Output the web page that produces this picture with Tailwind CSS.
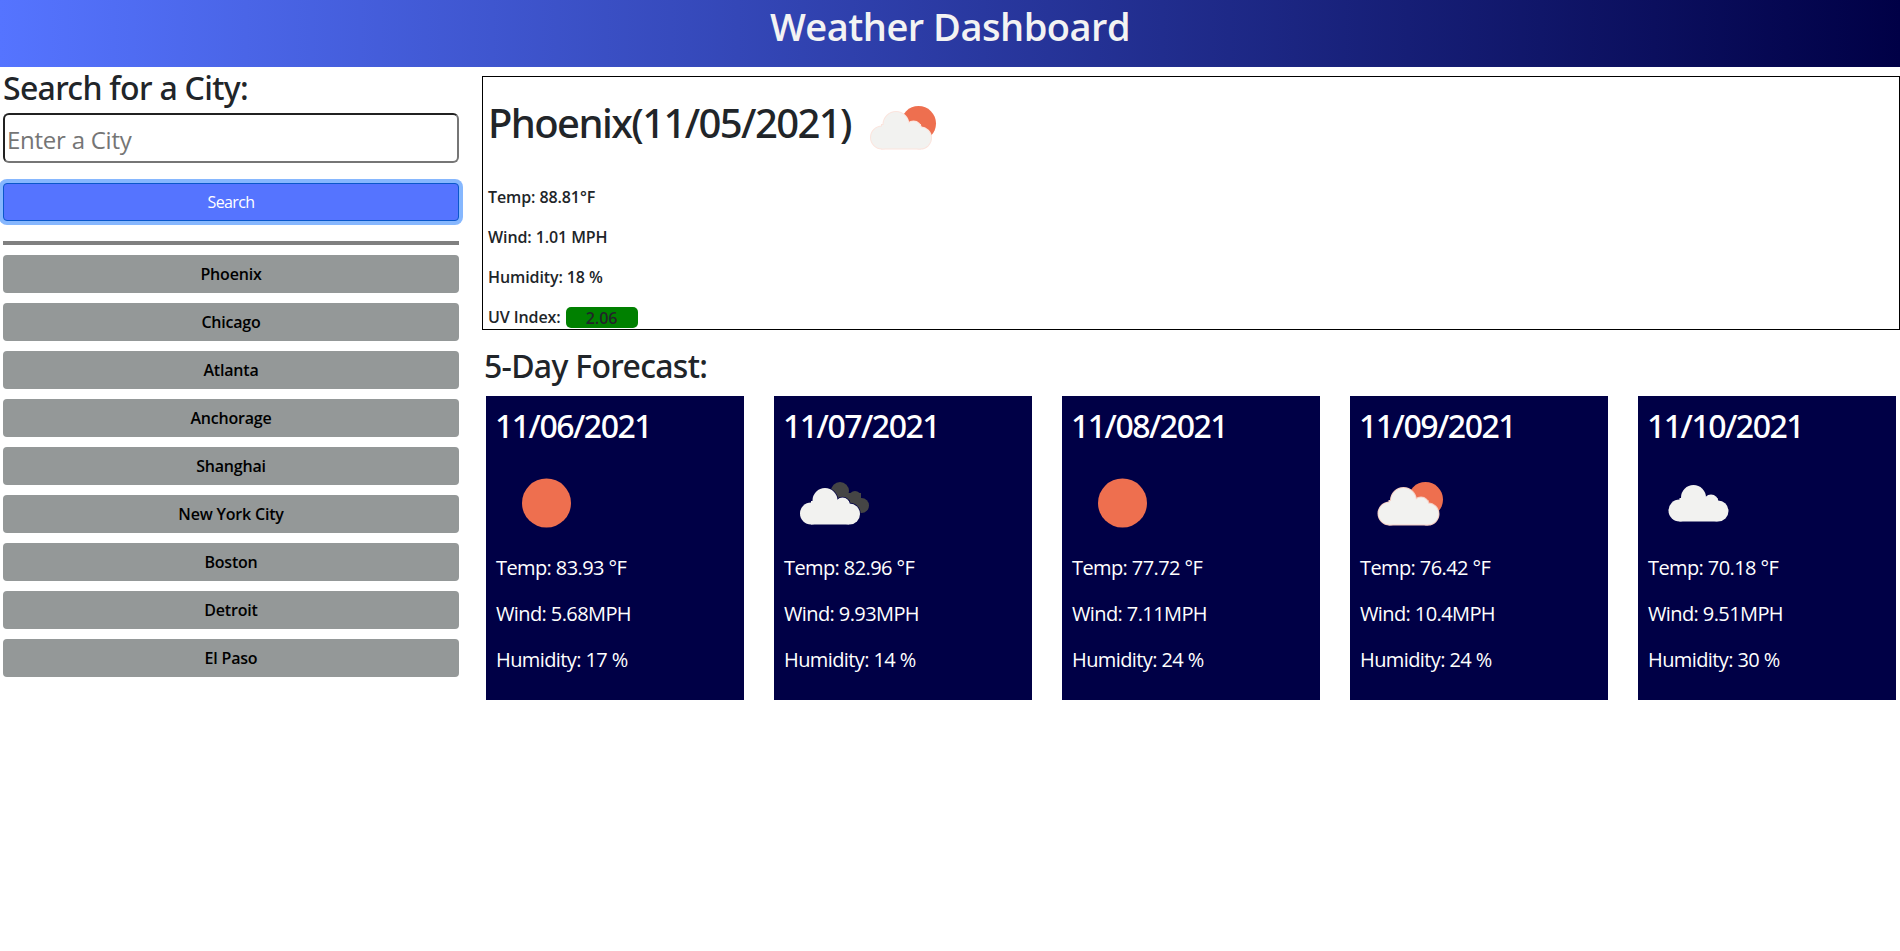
<!DOCTYPE html>
<html lang="en">
<head>
<meta charset="utf-8">
<title>Weather Dashboard</title>
<script src="https://cdn.jsdelivr.net/npm/@tailwindcss/browser@4"></script>
</head>
<body class="bg-white text-[#212529] font-['Open_Sans','Noto_Sans',sans-serif]">
<svg width="0" height="0" class="absolute">
  <defs>
    <g id="cloud">
      <circle cx="29" cy="60.5" r="11"/>
      <circle cx="43" cy="47.5" r="12.5"/>
      <circle cx="60.5" cy="52" r="7.5"/>
      <circle cx="67.5" cy="61" r="10.5"/>
      <rect x="29" y="48" width="38" height="23.5"/>
    </g>
    <g id="cloud-small">
      <circle cx="56" cy="38" r="9"/>
      <circle cx="71" cy="44" r="6"/>
      <circle cx="77.5" cy="52.5" r="7.5"/>
      <rect x="55" y="40" width="22" height="20"/>
    </g>
  </defs>
</svg>
<header class="h-[67px] bg-[linear-gradient(to_right,#5574ff,#000046)] flex justify-center">
  <h1 class="text-[38px] leading-[52px] font-semibold text-[#f3f3f3] tracking-[-0.5px]">Weather Dashboard</h1>
</header>
<div class="flex">
  <aside class="w-[482px] shrink-0 pl-[3px] pr-[23px]">
    <h2 class="text-[32px] leading-[44px] font-['Noto_Sans',sans-serif] font-medium tracking-[-0.7px] mt-[-1px]">Search for a City:</h2>
    <input class="block w-full h-[50px] mt-[3px] border-2 border-t-[#212121] border-l-[#212121] border-r-[#767676] border-b-[#767676] rounded-md px-[2px] pt-[2px] text-[24px] tracking-[-0.25px] placeholder:text-[#757575] outline-none" placeholder="Enter a City">
    <button class="block w-full h-[38px] mt-[20px] rounded-[4px] bg-[#5574ff] border border-[#0a58ca] ring-4 ring-[#86b7fe] text-white text-[16px] tracking-[-0.6px]">Search</button>
    <div class="h-1 mt-[20px] bg-[#808080]"></div>
    <div class="mt-[10px] flex flex-col gap-[10px]">
      <button class="h-[38px] rounded-[4px] bg-[#949898] text-black text-[16px] font-semibold tracking-[-0.2px]">Phoenix</button>
      <button class="h-[38px] rounded-[4px] bg-[#949898] text-black text-[16px] font-semibold tracking-[-0.2px]">Chicago</button>
      <button class="h-[38px] rounded-[4px] bg-[#949898] text-black text-[16px] font-semibold tracking-[-0.2px]">Atlanta</button>
      <button class="h-[38px] rounded-[4px] bg-[#949898] text-black text-[16px] font-semibold tracking-[-0.2px]">Anchorage</button>
      <button class="h-[38px] rounded-[4px] bg-[#949898] text-black text-[16px] font-semibold tracking-[-0.2px]">Shanghai</button>
      <button class="h-[38px] rounded-[4px] bg-[#949898] text-black text-[16px] font-semibold tracking-[-0.2px]">New York City</button>
      <button class="h-[38px] rounded-[4px] bg-[#949898] text-black text-[16px] font-semibold tracking-[-0.2px]">Boston</button>
      <button class="h-[38px] rounded-[4px] bg-[#949898] text-black text-[16px] font-semibold tracking-[-0.2px]">Detroit</button>
      <button class="h-[38px] rounded-[4px] bg-[#949898] text-black text-[16px] font-semibold tracking-[-0.2px]">El Paso</button>
    </div>
  </aside>
  <main class="flex-1 min-w-0 pt-[9px]">
    <section class="h-[254px] border border-black pl-[5px] overflow-hidden">
      <div class="flex h-[100px]">
        <h2 class="text-[40px] leading-[100px] font-['Noto_Sans',sans-serif] font-medium tracking-[-1.6px] mt-[-4px] w-[365px]">Phoenix(11/05/2021)</h2>
        <svg class="w-[100px] h-[100px]" viewBox="0 0 100 100">
          <circle cx="65.5" cy="46.5" r="17.5" fill="#ee6f4f"/>
          <use href="#cloud" fill="#fbe4dd" stroke="#fbe4dd" stroke-width="2"/>
          <use href="#cloud" fill="#f2f2f0"/>
        </svg>
      </div>
      <div class="mt-[8px] flex flex-col gap-[16px] text-[16px] leading-[24px] font-semibold tracking-[-0.1px]">
        <p>Temp: 88.81°F</p>
        <p>Wind: 1.01 MPH</p>
        <p>Humidity: 18 %</p>
        <p class="flex items-center">UV Index:<span class="ml-[5px] h-[21px] w-[72px] rounded-[5px] bg-[#008000] text-center leading-[22px]">2.06</span></p>
      </div>
    </section>
    <h3 class="text-[32px] leading-[40px] font-['Noto_Sans',sans-serif] font-medium tracking-[-0.7px] ml-[2px] mt-[16px]">5-Day Forecast:</h3>
    <div class="grid grid-cols-5 gap-[30px] mx-[4px] mt-[10px]">
      <article class="h-[304px] bg-[#000046] text-white p-[10px] pt-[11px]">
        <h4 class="text-[32px] leading-[38px] mb-[8px] ml-[-1px] font-['Noto_Sans',sans-serif] font-medium tracking-[-1.5px]">11/06/2021</h4>
        <svg class="w-[100px] h-[100px]" viewBox="0 0 100 100"><circle cx="50.5" cy="50" r="24.5" fill="#ee6f4f"/></svg>
        <div class="flex flex-col gap-[16px] text-[20px] leading-[30px] tracking-[-0.6px]">
          <p>Temp: 83.93 °F</p><p>Wind: 5.68MPH</p><p>Humidity: 17 %</p>
        </div>
      </article>
      <article class="h-[304px] bg-[#000046] text-white p-[10px] pt-[11px]">
        <h4 class="text-[32px] leading-[38px] mb-[8px] ml-[-1px] font-['Noto_Sans',sans-serif] font-medium tracking-[-1.5px]">11/07/2021</h4>
        <svg class="w-[100px] h-[100px]" viewBox="0 0 100 100">
          <use href="#cloud-small" fill="#454545"/>
          <g transform="translate(-2 0)"><use href="#cloud" fill="#000046" stroke="#000046" stroke-width="1.5"/><use href="#cloud" fill="#f2f2f0"/></g>
        </svg>
        <div class="flex flex-col gap-[16px] text-[20px] leading-[30px] tracking-[-0.6px]">
          <p>Temp: 82.96 °F</p><p>Wind: 9.93MPH</p><p>Humidity: 14 %</p>
        </div>
      </article>
      <article class="h-[304px] bg-[#000046] text-white p-[10px] pt-[11px]">
        <h4 class="text-[32px] leading-[38px] mb-[8px] ml-[-1px] font-['Noto_Sans',sans-serif] font-medium tracking-[-1.5px]">11/08/2021</h4>
        <svg class="w-[100px] h-[100px]" viewBox="0 0 100 100"><circle cx="50.5" cy="50" r="24.5" fill="#ee6f4f"/></svg>
        <div class="flex flex-col gap-[16px] text-[20px] leading-[30px] tracking-[-0.6px]">
          <p>Temp: 77.72 °F</p><p>Wind: 7.11MPH</p><p>Humidity: 24 %</p>
        </div>
      </article>
      <article class="h-[304px] bg-[#000046] text-white p-[10px] pt-[11px]">
        <h4 class="text-[32px] leading-[38px] mb-[8px] ml-[-1px] font-['Noto_Sans',sans-serif] font-medium tracking-[-1.5px]">11/09/2021</h4>
        <svg class="w-[100px] h-[100px]" viewBox="0 0 100 100">
          <circle cx="65.5" cy="46.5" r="17.5" fill="#ee6f4f"/>
          <g transform="translate(0.5 0)"><use href="#cloud" fill="#f6cfc4" stroke="#f6cfc4" stroke-width="2"/>
          <use href="#cloud" fill="#f2f2f0"/></g>
        </svg>
        <div class="flex flex-col gap-[16px] text-[20px] leading-[30px] tracking-[-0.6px]">
          <p>Temp: 76.42 °F</p><p>Wind: 10.4MPH</p><p>Humidity: 24 %</p>
        </div>
      </article>
      <article class="h-[304px] bg-[#000046] text-white p-[10px] pt-[11px]">
        <h4 class="text-[32px] leading-[38px] mb-[8px] ml-[-1px] font-['Noto_Sans',sans-serif] font-medium tracking-[-1.5px]">11/10/2021</h4>
        <svg class="w-[100px] h-[100px]" viewBox="0 0 100 100">
          <g transform="translate(2.5 -3)"><use href="#cloud" fill="#f2f2f0"/></g>
        </svg>
        <div class="flex flex-col gap-[16px] text-[20px] leading-[30px] tracking-[-0.6px]">
          <p>Temp: 70.18 °F</p><p>Wind: 9.51MPH</p><p>Humidity: 30 %</p>
        </div>
      </article>
    </div>
  </main>
</div>
</body>
</html>
